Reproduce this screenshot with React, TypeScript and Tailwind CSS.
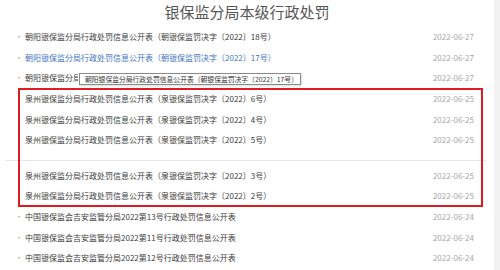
import React from "react";

type Row = { text: string; date: string; blue?: boolean; clip?: boolean };

const top: Row[] = [
  { text: "朝阳银保监分局行政处罚信息公开表（朝银保监罚决字〔2022〕18号）", date: "2022-06-27" },
  { text: "朝阳银保监分局行政处罚信息公开表（朝银保监罚决字〔2022〕17号）", date: "2022-06-27", blue: true },
  { text: "朝阳银保监分局行政处罚信息公开表（朝银保监罚决字〔2022〕17号）", date: "2022-06-27", clip: true },
  { text: "泉州银保监分局行政处罚信息公开表（泉银保监罚决字〔2022〕6号）", date: "2022-06-25" },
  { text: "泉州银保监分局行政处罚信息公开表（泉银保监罚决字〔2022〕4号）", date: "2022-06-25" },
  { text: "泉州银保监分局行政处罚信息公开表（泉银保监罚决字〔2022〕5号）", date: "2022-06-25" },
];

const bottom: Row[] = [
  { text: "泉州银保监分局行政处罚信息公开表（泉银保监罚决字〔2022〕3号）", date: "2022-06-25" },
  { text: "泉州银保监分局行政处罚信息公开表（泉银保监罚决字〔2022〕2号）", date: "2022-06-25" },
  { text: "中国银保监会吉安监管分局2022第13号行政处罚信息公开表", date: "2022-06-24" },
  { text: "中国银保监会吉安监管分局2022第11号行政处罚信息公开表", date: "2022-06-24" },
  { text: "中国银保监会吉安监管分局2022第12号行政处罚信息公开表", date: "2022-06-24" },
];

function ListRow({ r }: { r: Row }) {
  return (
    <div className="flex h-[20.6px] items-center pl-[15px] pr-[20px] text-[8px] leading-none">
      <span className="w-[10px] text-[#aaa]">·</span>
      <div className="flex-1">
        <span
          className={
            (r.blue ? "text-[#3f74c0] " : "text-[#3a3a3a] ") +
            (r.clip ? "block w-[53px] overflow-hidden whitespace-nowrap" : "whitespace-nowrap")
          }
        >
          {r.text}
        </span>
      </div>
      <span className="whitespace-nowrap text-[#a8a8a8]">{r.date}</span>
    </div>
  );
}

export default function App() {
  return (
    <div
      className="relative flex h-[270px] w-[500px] overflow-hidden bg-white"
      style={{ fontFamily: '"Noto Sans CJK SC", "Noto Sans", sans-serif' }}
    >
      <div className="w-[494px]">
        <div className="flex h-[27px] items-start justify-center pt-[1px] text-[15px] leading-[22px] text-[#555]">
          银保监分局本级行政处罚
        </div>
        {top.map((r, i) => (
          <ListRow key={i} r={r} />
        ))}
        <div className="ml-[5px] mt-[9px] mb-[5px] h-px w-[481px] bg-[#e6e6e6]" />
        {bottom.map((r, i) => (
          <ListRow key={i} r={r} />
        ))}
      </div>
      <div className="w-[6px] bg-[#f1f1f1]" />

      {/* tooltip */}
      <div className="absolute left-[79px] top-[73px] flex h-[12px] w-[222px] items-center border border-[#8a8a8a] bg-white pl-[5px] text-[6.8px] leading-none whitespace-nowrap text-[#333] shadow-[1px_1px_2px_rgba(0,0,0,0.15)]">
        朝阳银保监分局行政处罚信息公开表（朝银保监罚决字〔2022〕17号）
      </div>

      {/* red annotation box */}
      <div className="pointer-events-none absolute left-[18px] top-[88px] h-[119px] w-[465px] border-2 border-[#e01b22]" />
    </div>
  );
}
